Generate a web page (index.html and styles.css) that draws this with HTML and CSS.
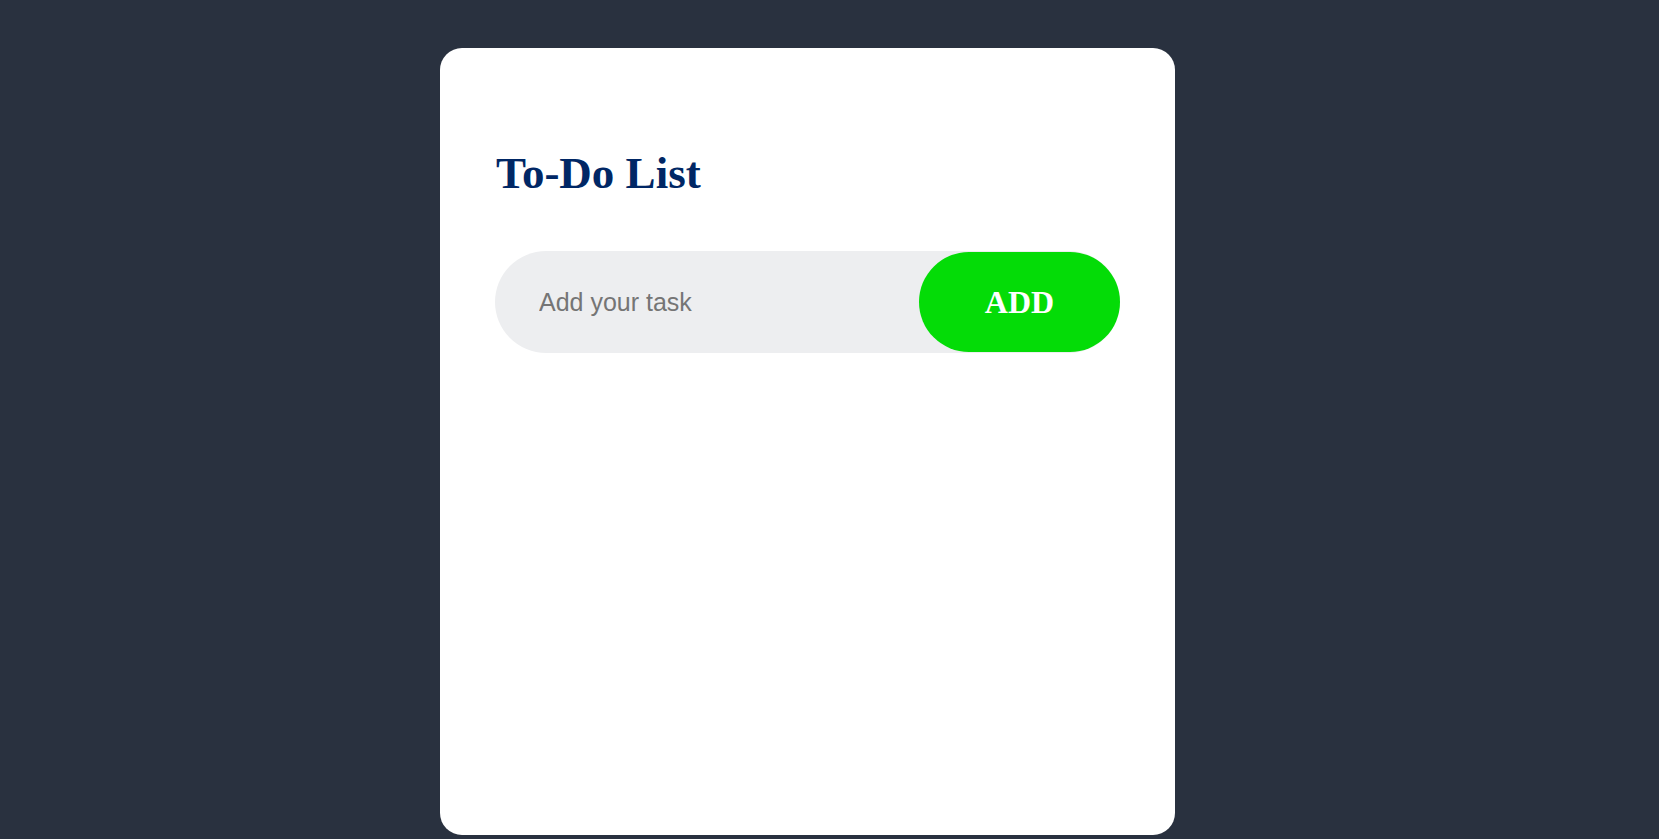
FILE: index.html
```html
<!DOCTYPE html>
<html lang="en">
<head>
<meta charset="utf-8">
<title>To-Do List</title>
<link rel="stylesheet" href="styles.css">
</head>
<body>
<div class="page">
  <div class="todo-app">
    <h2 class="title">To-Do List</h2>
    <div class="row">
      <input class="task-input" type="text" placeholder="Add your task">
      <button class="add-btn" type="button">ADD</button>
    </div>
    <ul class="list"></ul>
  </div>
</div>
</body>
</html>
```
FILE: styles.css
```css
html, body {
  margin: 0;
  padding: 0;
  background: #29313f;
}
.page {
  min-height: 839px;
  padding: 48px 0 0 440px;
  box-sizing: border-box;
}
.todo-app {
  width: 735px;
  height: 787px;
  box-sizing: border-box;
  background: #ffffff;
  border-radius: 22px;
  padding: 97px 55px 0 55px;
}
.title {
  margin: 0 0 50px 1px;
  font-family: "Liberation Serif", "Times New Roman", serif;
  font-weight: bold;
  font-size: 45px;
  line-height: 56px;
  color: #002765;
}
.row {
  display: flex;
  align-items: center;
  height: 102px;
  background: #edeef0;
  border-radius: 51px;
}
.task-input {
  flex: 1;
  min-width: 0;
  border: none;
  outline: none;
  background: transparent;
  padding: 0 0 0 44px;
  font-family: "Liberation Sans", Arial, sans-serif;
  font-size: 25px;
  color: #333;
}
.task-input::placeholder {
  color: #757575;
}
.add-btn {
  width: 201px;
  height: 100px;
  border: none;
  border-radius: 50px;
  background: #04dc07;
  color: #ffffff;
  font-family: "Liberation Serif", "Times New Roman", serif;
  font-weight: bold;
  font-size: 32px;
  padding: 0;
  cursor: pointer;
}
.list {
  margin: 0;
  padding: 0;
  list-style: none;
}
```
